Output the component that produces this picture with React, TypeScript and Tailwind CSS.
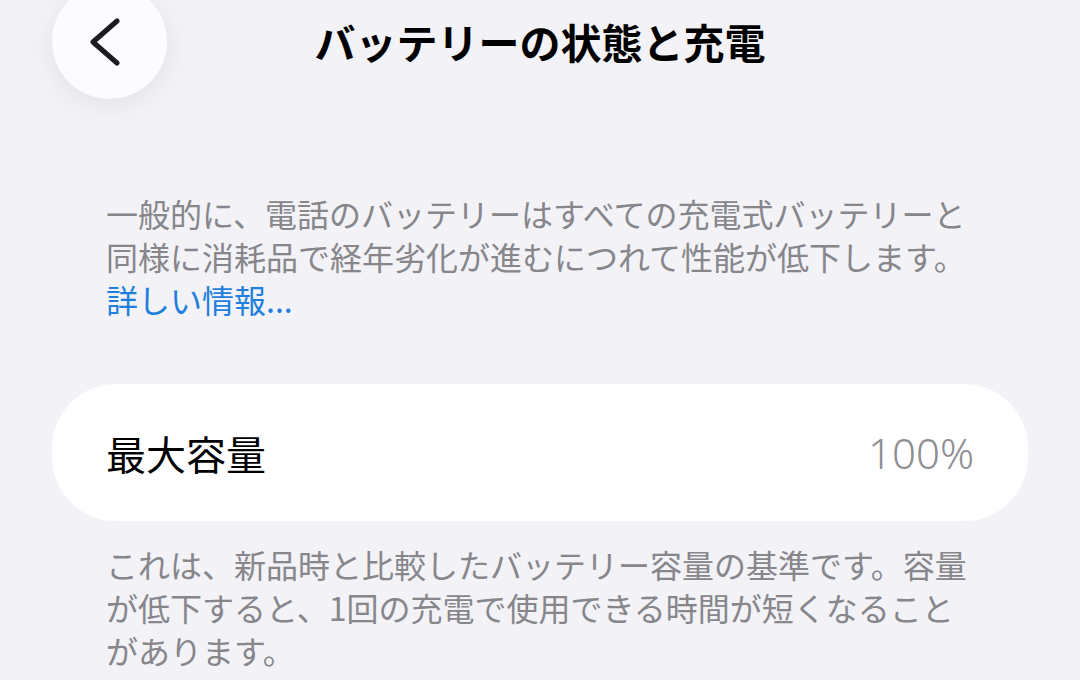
import React from 'react';

const jp = { fontFamily: '"Noto Sans CJK JP", "Noto Sans", sans-serif' };

const BackButton = () => (
  <button className="w-[115px] h-[115px] rounded-full bg-[#fcfcfe] shadow-[0_6px_30px_rgba(0,0,0,0.07)] flex items-center justify-center">
    <svg width="48" height="48" viewBox="0 0 48 48">
      <path d="M31 3 L7 24 L31 45" fill="none" stroke="#1c1c1e" strokeWidth="5" strokeLinecap="round" strokeLinejoin="round" />
    </svg>
  </button>
);

const App = () => {
  return (
    <div className="w-[1080px] h-[680px] overflow-hidden bg-[#f2f2f7] px-[52px]" style={jp}>
      {/* header */}
      <div className="grid grid-cols-[115px_1fr_115px] items-center -mt-[16px]">
        <BackButton />
        <h1 className="text-center text-[41px] font-bold text-black leading-none">バッテリーの状態と充電</h1>
        <div />
      </div>

      {/* intro */}
      <div className="mt-[93px] pl-[54px] w-[924px] text-[32px] leading-[43px] text-[#86868b]">
        <p>一般的に、電話のバッテリーはすべての充電式バッテリーと同様に消耗品で経年劣化が進むにつれて性能が低下します。</p>
        <p className="text-[#1f7fdc]">詳しい情報...</p>
      </div>

      {/* max capacity */}
      <div className="mt-[63px] h-[137px] rounded-[64px] bg-white flex items-center justify-between px-[54px]">
        <span className="text-[40px] text-black">最大容量</span>
        <span className="text-[42px] font-light text-[#8e8e93]" style={{ fontFamily: '"Noto Sans", sans-serif' }}>100%</span>
      </div>

      <div className="mt-[22px] pl-[54px] w-[924px] text-[32px] leading-[43px] text-[#86868b]">
        <p>これは、新品時と比較したバッテリー容量の基準です。容量が低下すると、1回の充電で使用できる時間が短くなることがあります。</p>
      </div>
    </div>
  );
};

export default App;
